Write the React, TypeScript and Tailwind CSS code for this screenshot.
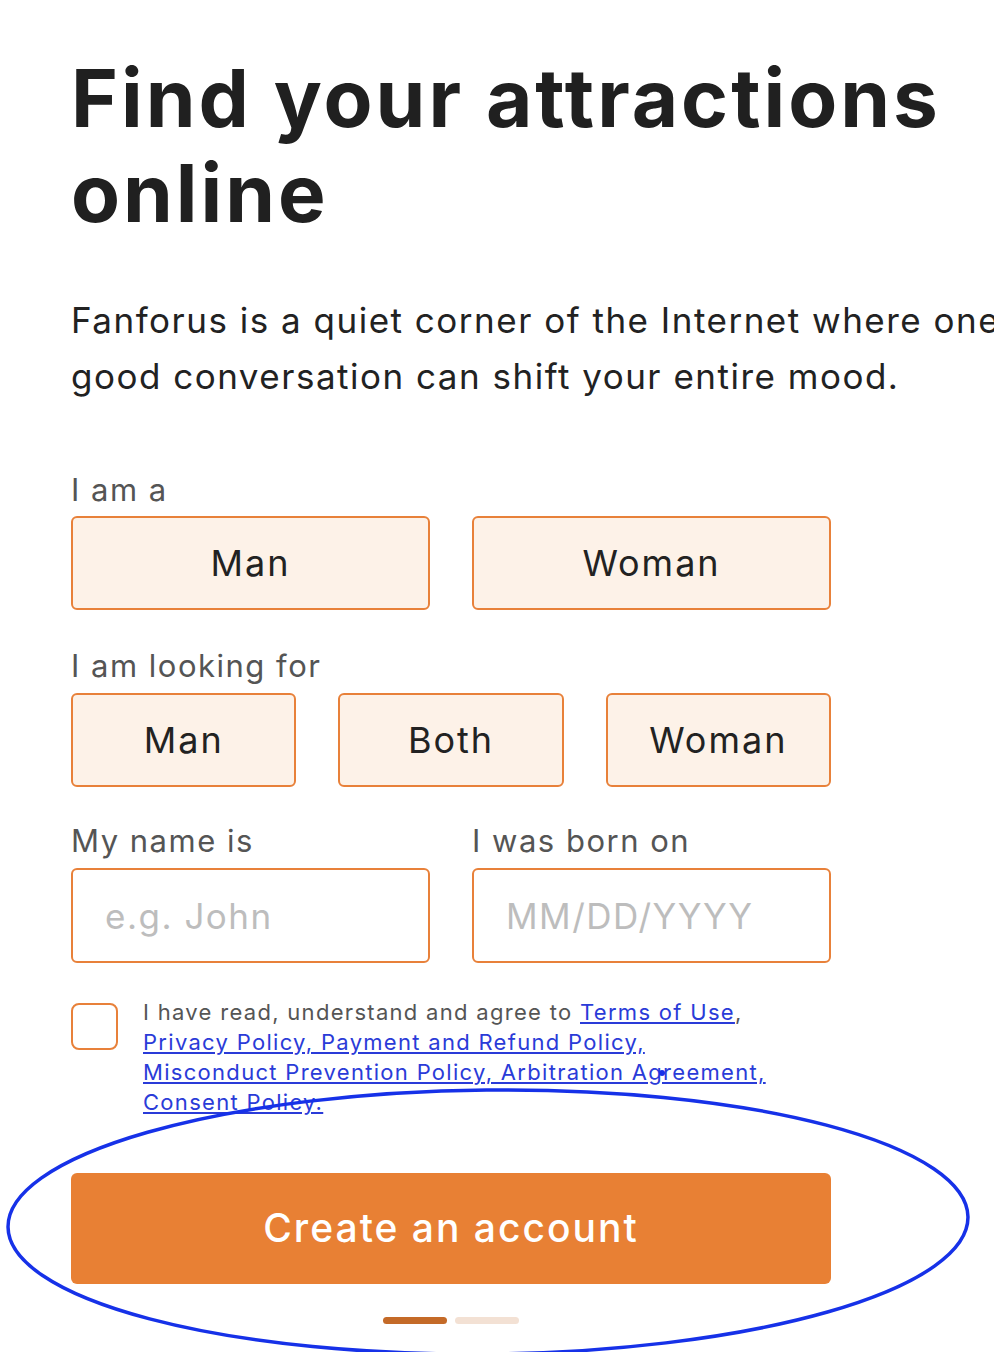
import React from 'react';

const choiceBtn =
  'h-[94px] rounded-md border-2 border-[#e8813a] bg-[#fdf2e8] text-[36px] tracking-[2px] text-[#222] flex items-center justify-center';

const labelCls = 'block text-[31px] leading-[38px] tracking-[1.5px] text-[#555]';

const inputCls =
  'mt-[8px] w-full h-[95px] rounded-md border-2 border-[#e8813a] bg-white px-[32px] text-[35px] tracking-[1.5px] text-[#222] placeholder:text-[#bdbdbd] outline-none';

const App: React.FC = () => {
  return (
    <div className="relative w-[994px] h-[1352px] overflow-hidden bg-white text-[#222] font-['Inter',sans-serif]">
      <div className="pl-[71px] pt-[50px]">
        <h1 className="text-[80px] font-bold leading-[95px] tracking-[3px] text-[#202020]">
          Find your attractions
          <br />
          online
        </h1>

        <p className="mt-[52px] text-[35px] leading-[56px] tracking-[1.5px] whitespace-nowrap text-[#222]">
          Fanforus is a quiet corner of the Internet where one
          <br />
          good conversation can shift your entire mood.
        </p>

        <form className="w-[760px] mt-[67px]">
          <label className={labelCls}>I am a</label>
          <div className="mt-[7px] grid grid-cols-2 gap-[42px]">
            <button type="button" className={choiceBtn}>Man</button>
            <button type="button" className={choiceBtn}>Woman</button>
          </div>

          <label className={`${labelCls} mt-[37px]`}>I am looking for</label>
          <div className="mt-[8px] grid grid-cols-3 gap-[42px]">
            <button type="button" className={choiceBtn}>Man</button>
            <button type="button" className={choiceBtn}>Both</button>
            <button type="button" className={choiceBtn}>Woman</button>
          </div>

          <div className="mt-[35px] grid grid-cols-2 gap-[42px]">
            <div>
              <label className={labelCls}>My name is</label>
              <input type="text" placeholder="e.g. John" className={inputCls} />
            </div>
            <div>
              <label className={labelCls}>I was born on</label>
              <input type="text" placeholder="MM/DD/YYYY" className={inputCls} />
            </div>
          </div>

          <div className="mt-[40px] flex items-start gap-[25px]">
            <span className="shrink-0 w-[47px] h-[47px] rounded-lg border-2 border-[#e8813a] bg-white" />
            <p className="-mt-[6px] text-[22px] leading-[30px] tracking-[1.3px] text-[#555] whitespace-nowrap">
              I have read, understand and agree to{' '}
              <a href="#" className="text-[#2a3bd8] underline">Terms of Use</a>,
              <br />
              <a href="#" className="text-[#2a3bd8] underline">Privacy Policy, Payment and Refund Policy,</a>
              <br />
              <a href="#" className="text-[#2a3bd8] underline">Misconduct Prevention Policy, Arbitration Agreement,</a>
              <br />
              <a href="#" className="text-[#2a3bd8] underline">Consent Policy.</a>
            </p>
          </div>

          <button
            type="button"
            className="mt-[56px] w-full h-[111px] rounded-md bg-[#e88034] text-white text-[39px] tracking-[2px] font-medium flex items-center justify-center"
          >
            Create an account
          </button>

          <div className="mt-[33px] flex justify-center gap-[8px]">
            <span className="w-[64px] h-[7px] rounded-full bg-[#c46a28]" />
            <span className="w-[64px] h-[7px] rounded-full bg-[#f3e1d4]" />
          </div>
        </form>
      </div>

      {/* hand-drawn highlight round the submit button */}
      <svg
        className="absolute left-0 top-0 pointer-events-none"
        width="994"
        height="1352"
        viewBox="0 0 994 1352"
        fill="none"
      >
        <ellipse
          cx="488"
          cy="1222"
          rx="480"
          ry="132"
          transform="rotate(-0.6 488 1222)"
          stroke="#1631e8"
          strokeWidth="3.5"
        />
        <circle cx="662" cy="1073" r="3" fill="#1631e8" />
      </svg>
    </div>
  );
};

export default App;
